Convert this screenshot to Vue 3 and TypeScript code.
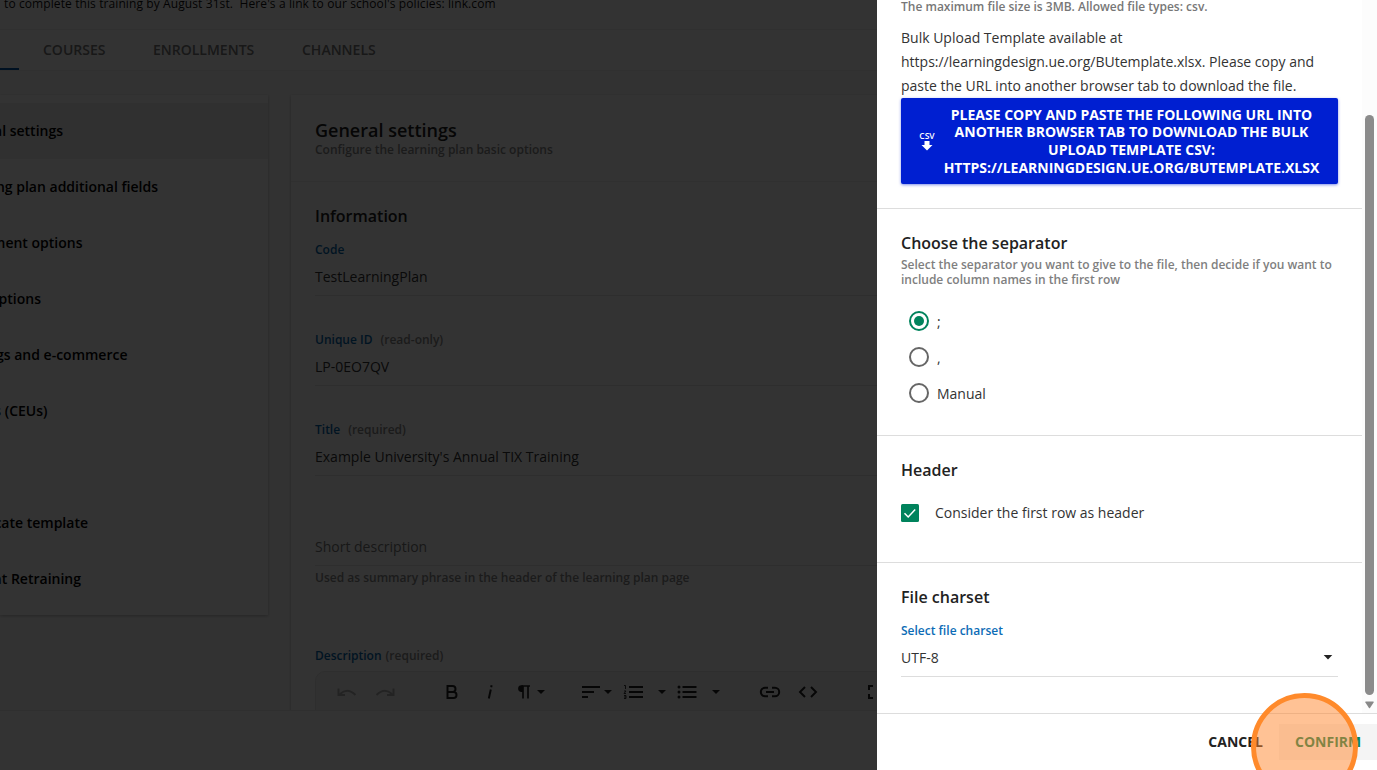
<script setup lang="ts">
interface MenuItem { label: string; end: number; active?: boolean }
interface Field { label: string; hint?: string; value: string }

const menu: MenuItem[] = [
  { label: 'General settings', end: 63, active: true },
  { label: 'Learning plan additional fields', end: 158 },
  { label: 'Enrollment options', end: 82.5 },
  { label: 'Time options', end: 41 },
  { label: 'Catalogs and e-commerce', end: 127.5 },
  { label: 'Credits (CEUs)', end: 47.5 },
  { label: '', end: 0 },
  { label: 'Certificate template', end: 88 },
  { label: 'Student Retraining', end: 81 },
]
const fields: Field[] = [
  { label: 'Code', value: 'TestLearningPlan' },
  { label: 'Unique ID', hint: '(read-only)', value: 'LP-0EO7QV' },
  { label: 'Title', hint: '(required)', value: "Example University's Annual TIX Training" },
]
const separators = [';', ',', 'Manual']
const selected = ';'
</script>

<template>
  <div class="screen">
    <div class="page">
      <div class="intro">to complete this training by August 31st.&nbsp; Here's a link to our school's policies: link.com</div>
      <nav class="tabs">
        <span class="tab current"></span>
        <span class="tab t1">COURSES</span>
        <span class="tab t2">ENROLLMENTS</span>
        <span class="tab t3">CHANNELS</span>
      </nav>
      <main class="content">
        <aside class="menu">
          <div v-for="(m, i) in menu" :key="i" class="menu-item" :class="{ active: m.active }">
            <span class="menu-label" :style="{ width: m.end + 'px' }">{{ m.label }}</span>
          </div>
        </aside>
        <section class="card">
          <header class="card-head">
            <h1>General settings</h1>
            <p>Configure the learning plan basic options</p>
          </header>
          <div class="card-body">
            <h2>Information</h2>
            <div v-for="f in fields" :key="f.label" class="field">
              <div class="label"><b>{{ f.label }}</b><span v-if="f.hint">{{ f.hint }}</span></div>
              <div class="value">{{ f.value }}</div>
            </div>
            <div class="field short">
              <div class="value placeholder">Short description</div>
              <div class="note">Used as summary phrase in the header of the learning plan page</div>
            </div>
            <div class="label desc"><b>Description</b><span>(required)</span></div>
            <div class="toolbar">
              <svg width="562" height="40" viewBox="315 672 562 40">
                <g fill="none" stroke="#b0b0b0" stroke-width="2">
                  <path d="M340 694q7.500-7 15.500 1M338.500 688.500v6.500h6.500" />
                  <path d="M392 694q-7.500-7-15.500 1M393.500 688.500v6.500h-6.500" />
                </g>
                <g fill="none" stroke="#222" stroke-width="2">
                  <path d="M447.500 686h5a2.800 2.800 0 0 1 0 6h-5zM447.500 692h6a3 3 0 0 1 0 6h-6z" />
                  <path d="M490.800 689.500l-2 9M491.600 685.300l-.4 2" />
                  <path d="M523 698.500v-12.500M528 698.500v-12.500M530 686h-8.500" stroke-width="1.700" />
                  <path d="M582 687h18M582 692h12M582 697h6" />
                  <path d="M629 687h14M629 692h14M629 697h14" />
                  <path d="M682.500 687h14M682.500 692h14M682.500 697h14" />
                  <path d="M768 687.800h-3a4.200 4.200 0 0 0 0 8.400h3M772 687.800h3a4.200 4.200 0 0 1 0 8.400h-3M766 692h8" />
                  <path d="M805 687l-5 5 5 5M811 687l5 5-5 5" />
                  <path d="M873 686h-4v4M869 694v4h4" />
                  <path d="M624 685.500h1.500v3.500M624 691h2l-2 2.500h2M624 695.500h2v3h-2M624 697h2" stroke-width=".9" />
                </g>
                <g fill="#222">
                  <path d="M523 685.200h-1.500a3.300 3.300 0 0 0 0 6.800h1.500zM537 690h8l-4 4zM604 690h8l-4 4zM658 690h8l-4 4zM712 690h8l-4 4z" />
                  <circle cx="679" cy="687" r="1.500" /><circle cx="679" cy="692" r="1.500" /><circle cx="679" cy="697" r="1.500" />
                </g>
              </svg>
            </div>
          </div>
        </section>
      </main>
      <div class="page-foot"></div>
      <div class="shade"></div>
    </div>

    <div class="drawer">
      <div class="drawer-main">
        <div class="sections">
          <section class="upload">
            <p class="limit">The maximum file size is 3MB. Allowed file types: csv.</p>
            <p class="text">Bulk Upload Template available at<br>https://learningdesign.ue.org/BUtemplate.xlsx. Please copy and<br>paste the URL into another browser tab to download the file.</p>
            <button class="download">
              <span class="csv">CSV
                <svg width="12" height="10" viewBox="0 0 12 10"><path d="M3.500 0h5v4h3L6 9.500.5 4h3z" fill="#fff" /></svg>
              </span>
              <span class="download-text">PLEASE COPY AND PASTE THE FOLLOWING URL INTO<br>ANOTHER BROWSER TAB TO DOWNLOAD THE BULK<br>UPLOAD TEMPLATE CSV:<br>HTTPS://LEARNINGDESIGN.UE.ORG/BUTEMPLATE.XLSX</span>
            </button>
          </section>
          <section class="separator">
            <h3>Choose the separator</h3>
            <p class="sub">Select the separator you want to give to the file, then decide if you want to<br>include column names in the first row</p>
            <div class="radios">
              <label v-for="s in separators" :key="s" class="radio">
                <span class="dot" :class="{ on: s === selected }"></span><span>{{ s }}</span>
              </label>
            </div>
          </section>
          <section class="header-opt">
            <h3>Header</h3>
            <label class="check">
              <svg width="18" height="18" viewBox="0 0 18 18"><rect width="18" height="18" rx="1.500" fill="#00835c" /><path d="M3.500 9.300l3.700 3.700 7-7.500" fill="none" stroke="#fff" stroke-width="1.500" /></svg>
              <span>Consider the first row as header</span>
            </label>
          </section>
          <section class="charset">
            <h3>File charset</h3>
            <div class="select-label">Select file charset</div>
            <div class="select"><span>UTF-8</span>
              <svg width="10" height="5" viewBox="0 0 10 5"><path d="M.7 0h8.600L5 4.600z" fill="#222" /></svg>
            </div>
          </section>
        </div>
        <div class="scrollbar">
          <div class="thumb"></div>
          <svg width="9" height="8" viewBox="0 0 9 8"><path d="M.8.500h7.400q.8.200.4 1L5 7q-.5.600-1 0L.4 1.500Q0 .7.800.500z" fill="#888" /></svg>
        </div>
      </div>
      <footer class="actions">
        <button class="cancel">CANCEL</button>
        <button class="confirm">CONFIRM</button>
      </footer>
    </div>
    <div class="highlight"></div>
  </div>
</template>

<style>
body { margin: 0; overflow: hidden; }
</style>

<style scoped>
* { box-sizing: border-box; margin: 0; }
.screen { position: relative; display: flex; width: 1377px; height: 770px; overflow: hidden; font-family: "Open Sans", "Noto Sans", sans-serif; font-size: 14px; color: #333; background: #fff; white-space: nowrap; }
.page { position: relative; display: flex; flex-direction: column; flex: none; width: 877px; height: 770px; overflow: hidden; background: #fff; }
.shade { position: absolute; inset: 0; background: rgba(0, 0, 0, .8); }
.intro { flex: none; height: 30px; padding-left: 4px; line-height: 8px; font-size: 12px; letter-spacing: .1px; color: #111; border-bottom: 1px solid #eee; }
.tabs { display: flex; height: 41px; flex: none; border-bottom: 1px solid #eee; font-weight: 600; color: #777; line-height: 40px; }
.tab.current { width: 19px; border-bottom: 2px solid #0057a8; margin-right: 24px; }
.t1 { width: 110px; }
.t2 { width: 149px; }
.content { display: flex; gap: 23px; height: 639px; padding-top: 24px; overflow: hidden; background: #fafafa; }
.menu { flex: none; width: 268px; height: 520px; padding: 8px 0; background: #fff; box-shadow: 0 1px 3px rgba(0, 0, 0, .25); }
.menu-item { display: flex; align-items: center; height: 56px; padding-bottom: 2px; font-weight: 600; color: #000; }
.menu-item.active { background: #f0f0f0; }
.menu-label { display: flex; justify-content: flex-end; flex: none; }
.card { flex: 1; height: 800px; background: #fff; box-shadow: 0 1px 3px rgba(0, 0, 0, .25); }
.card-head { height: 87px; padding: 23px 24px 0; border-bottom: 1px solid #eee; }
h1 { font-size: 18px; line-height: 24px; font-weight: 600; color: #222; }
.card-head p { font-size: 12px; line-height: 15px; font-weight: 600; color: #888; }
.card-body { padding: 22px 0 0 24px; }
h2, h3 { font-size: 16px; line-height: 24px; font-weight: 600; color: #222; }
.field { height: 90px; }
h2 + .field { margin-top: 14px; }
.label { display: flex; gap: 8px; font-size: 12px; line-height: 16px; font-weight: 600; color: #888; }
.label b { font-weight: 600; color: #0465ac; }
.value { height: 30px; margin-top: 8px; line-height: 22px; border-bottom: 1px solid #e6e6e6; }
.short { height: 130px; padding-top: 16px; }
.placeholder { color: #777; }
.note { margin-top: 4px; font-size: 12px; line-height: 16px; font-weight: 600; color: #888; }
.desc { gap: 4px; margin-top: 6px; }
.toolbar { height: 60px; margin-top: 7px; border: 1px solid #e6e6e6; border-radius: 10px 0 0; background: #f6f6f6; }
.toolbar svg { display: block; margin-left: -1px; }
.page-foot { flex: none; height: 60px; border-top: 1px solid #eaeaea; background: #fff; }

.drawer { display: flex; flex-direction: column; flex: none; width: 500px; height: 770px; background: #fff; }
.drawer-main { display: flex; height: 713px; }
.sections { flex: none; width: 485px; height: 713px; overflow: hidden; }
.sections section { padding: 0 24px; border-bottom: 1px solid #ddd; }
.sections .upload { height: 209px; }
.limit { height: 26px; font-size: 12px; line-height: 14px; font-weight: 600; color: #777; }
.text { line-height: 24px; }
button { border: 0; padding: 0; font: inherit; }
.download { display: flex; align-items: center; width: 437px; height: 86px; padding-left: 18px; background: #001fd1; border-radius: 2px; color: #fff; font-weight: 700; box-shadow: 0 1px 3px rgba(0, 31, 209, .5); }
.csv { display: flex; flex-direction: column; align-items: center; width: 16px; font-size: 8.500px; line-height: 10px; font-weight: 600; }
.download-text { width: 376px; margin-left: 8.500px; line-height: 17.600px; text-align: center; }
.sections .separator { height: 227px; padding-top: 22px; }
.sub { margin-top: 2px; font-size: 12px; line-height: 15px; font-weight: 600; color: #808080; }
.radios { padding: 16px 0 0 8px; }
.radio { display: flex; align-items: center; gap: 8px; height: 36px; }
.dot { width: 20px; height: 20px; border: 2px solid #666; border-radius: 50%; }
.dot.on { padding: 3px; border-color: #00835c; background: #00835c content-box; }
.sections .header-opt { height: 127px; padding-top: 22px; }
.check { display: flex; align-items: center; gap: 16px; height: 20px; margin-top: 21px; }
.check span { padding-bottom: 2px; }
.sections .charset { height: 160px; padding-top: 22px; }
.select-label { margin-top: 14px; font-size: 12px; line-height: 16px; font-weight: 600; color: #0c6cb6; }
.select { display: flex; align-items: center; justify-content: space-between; width: 437px; height: 38px; padding-right: 5px; border-bottom: 1px solid #ddd; }
.scrollbar { display: flex; flex-direction: column; align-items: center; width: 15px; padding-top: 115px; background: #fcfcfc; }
.thumb { flex: none; width: 9px; height: 580px; margin-bottom: 6px; border-radius: 5px; background: #8b8b8b; }
.actions { display: flex; align-items: center; justify-content: flex-end; gap: 16px; height: 57px; border-top: 1px solid #ddd; font-weight: 700; }
.cancel { padding-bottom: 2px; background: none; color: #222; }
.confirm { width: 98px; height: 36px; padding: 0 0 2px 16px; text-align: left; color: #00835c; background: #f4f4f4; }
.highlight { position: absolute; left: 1251px; top: 693px; width: 107px; height: 107px; border: 5px solid #ff8a2b; border-radius: 50%; background: rgba(255, 133, 44, .5); }
</style>
